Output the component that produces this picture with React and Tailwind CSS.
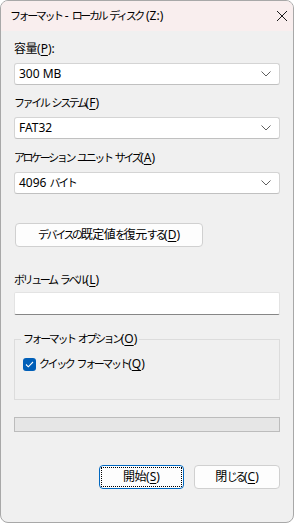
import React, { useState } from 'react';

const font = { fontFamily: '"Noto Sans", "Noto Sans CJK JP", sans-serif' };

// Yu Gothic UI kana are much narrower than Noto's, so tighten the CJK runs only
const jp = (s) =>
    s.split(/([\u3040-\u30ff]+|[\u4e00-\u9fff]+)/).map((part, i) => {
        if (/^[\u3040-\u30ff]/.test(part)) return <span key={i} className="text-[11px] tracking-[-2.4px]">{part}</span>;
        if (/^[\u4e00-\u9fff]/.test(part)) return <span key={i} className="tracking-[-0.5px]">{part}</span>;
        return part;
    });

const Hot = ({ k }) => <>(<span className="underline underline-offset-2">{k}</span>)</>;

// Windows 11 style dropdown
const Combo = ({ value }) => (
    <div className="mx-[13px] h-[22px] flex items-center justify-between bg-white border border-[#d4d4d4] border-b-[#c0c0c0] rounded-[3px] pl-[4px] pr-[8px]">
        <span className="text-[12px] text-black leading-none">{jp(value)}</span>
        <svg width="10" height="6" viewBox="0 0 10 6" fill="none">
            <path d="M0.5 0.5 L5 5 L9.5 0.5" stroke="#5f5f5f" strokeWidth="1" />
        </svg>
    </div>
);

const Label = ({ text, hotkey, tail = '', className = '' }) => (
    <div className={`px-[13px] h-[16px] text-[12px] leading-[16px] text-black ${className}`}>
        {jp(text)}<Hot k={hotkey} />{tail}
    </div>
);

export default function App() {
    const [quick, setQuick] = useState(true);

    return (
        <div className="w-[294px] h-[523px] bg-[#f0f0f0] border border-[#a8a8a8] rounded-[8px] overflow-hidden flex flex-col" style={font}>
            {/* Title bar */}
            <div className="h-[30px] shrink-0 bg-[#f9eeee] flex items-center justify-between pl-[9px] pr-[3px]">
                <span className="text-[12px] text-black">{jp('フォーマット - ローカル ディスク (Z:)')}</span>
                <svg width="12" height="12" viewBox="0 0 12 12" className="mr-[2px]">
                    <path d="M1 1 L11 11 M11 1 L1 11" stroke="#1a1a1a" strokeWidth="1" />
                </svg>
            </div>

            <Label text="容量" hotkey="P" tail=":" className="mt-[10px]" />
            <div className="mt-[6px]"><Combo value="300 MB" /></div>

            <Label text="ファイル システム" hotkey="F" className="mt-[10px]" />
            <div className="mt-[6px]"><Combo value="FAT32" /></div>

            <Label text="アロケーション ユニット サイズ" hotkey="A" className="mt-[11px]" />
            <div className="mt-[6px]"><Combo value="4096 バイト" /></div>

            <div className="px-[14px] mt-[27px]">
                <button className="w-[188px] h-[24px] bg-[#fdfdfd] border border-[#d0d0d0] rounded-[4px] text-[12px] text-black">
                    {jp('デバイスの既定値を復元する')}<Hot k="D" />
                </button>
            </div>

            <Label text="ボリューム ラベル" hotkey="L" className="mt-[25px]" />
            <div className="mx-[13px] mt-[4px] h-[23px] bg-white border border-[#e3e3e3] border-b-[#868686] rounded-[2px]" />

            {/* Format options group */}
            <div className="relative mx-[13px] mt-[24px] h-[61px] border border-[#dcdcdc]">
                <span className="absolute -top-[9px] left-[6px] px-[2px] bg-[#f0f0f0] text-[12px] leading-[16px] text-black">
                    {jp('フォーマット オプション')}<Hot k="O" />
                </span>
                <label className="flex items-center mt-[16px] ml-[8px] gap-[3px] cursor-default">
                    <span
                        onClick={() => setQuick(!quick)}
                        className={`w-[13px] h-[13px] rounded-[3px] flex items-center justify-center ${quick ? 'bg-[#005fb8]' : 'bg-white border border-[#888]'}`}
                    >
                        {quick && (
                            <svg width="9" height="7" viewBox="0 0 9 7" fill="none">
                                <path d="M1 3.5 L3.3 5.8 L8 1" stroke="white" strokeWidth="1.1" />
                            </svg>
                        )}
                    </span>
                    <span className="text-[12px] leading-[16px] text-black">
                        {jp('クイック フォーマット')}<Hot k="Q" />
                    </span>
                </label>
            </div>

            {/* Progress bar */}
            <div className="mx-[13px] mt-[17px] h-[15px] bg-[#e6e6e6] border border-[#bcbcbc]" />

            {/* Footer buttons */}
            <div className="flex justify-end gap-[10px] pr-[13px] mt-[33px]">
                <button className="w-[85px] h-[24px] bg-[#fdfdfd] border border-[#0067c0] rounded-[4px] text-[12px] text-black p-[1px]">
                    <span className="flex items-center justify-center w-full h-full border border-dotted border-black">
                        {jp('開始')}<Hot k="S" />
                    </span>
                </button>
                <button className="w-[86px] h-[24px] bg-[#fdfdfd] border border-[#d0d0d0] rounded-[4px] text-[12px] text-black">
                    {jp('閉じる')}<Hot k="C" />
                </button>
            </div>
        </div>
    );
}
